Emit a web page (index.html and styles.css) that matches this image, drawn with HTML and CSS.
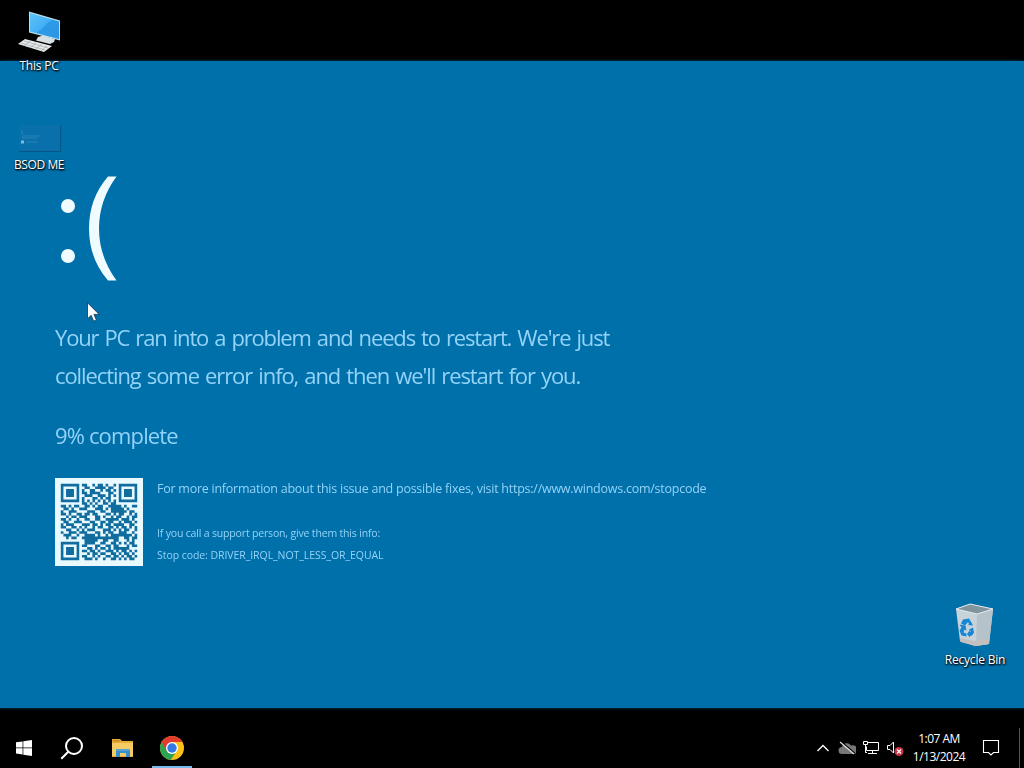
FILE: index.html
```html
<!DOCTYPE html>
<html lang="en">
<head>
  <meta charset="UTF-8">
  <meta name="viewport" content="width=device-width, initial-scale=1.0">
  <title>Desktop</title>
  <link rel="stylesheet" href="styles.css">
</head>
<body>

  <div class="desktop">
    <main class="wallpaper">
      <svg class="sad-face" width="64" height="110" viewBox="0 0 64 110">
        <circle cx="13" cy="32" r="7"/>
        <circle cx="13" cy="82" r="7"/>
        <path d="M53 2.500h8.500q-17.500 24-17.500 52t17.500 52h-8.500q-19-22-19-52t19-52z"/>
      </svg>

      <p class="message"><span class="line-one">Your PC ran into a problem and needs to restart. We're just</span><br><span class="line-two">collecting some error info, and then we'll restart for you.</span></p>
      <p class="progress">9% complete</p>

      <div class="details">
        <svg class="qr" id="qrCode" width="88" height="88" viewBox="-2.200 -2.200 33.400 33.400"></svg>
        <div class="info">
          <p class="more">For more information about this issue and possible fixes, visit https://www.windows.com/stopcode</p>
          <p class="support">If you call a support person, give them this info:</p>
          <p class="stop-code">Stop code: DRIVER_IRQL_NOT_LESS_OR_EQUAL</p>
        </div>
      </div>
    </main>

    <!-- Desktop icons -->
    <div class="icon this-pc">
      <svg width="48" height="48" viewBox="0 0 48 48">
        <defs>
          <linearGradient id="screen" x1="0" y1="0" x2="1" y2="1">
            <stop offset="0" stop-color="#5fc3fb"/>
            <stop offset=".5" stop-color="#43aef4"/>
            <stop offset=".5" stop-color="#2d9be9"/>
            <stop offset="1" stop-color="#2d94e2"/>
          </linearGradient>
        </defs>
        <path d="M14 3.500l31 9v20l-31-8z" fill="#b7dff2"/>
        <path d="M15 5l29 8.500v17.500l-29-7.500z" fill="url(#screen)"/>
        <path d="M23 29l5-1.500 12 3.500-1 3-4 2-14-3.500z" fill="#d7e0e5"/>
        <path d="M10 31l27 7-8 6-26-8z" fill="#e7e9ea"/>
        <path d="M9 33l24 7M6 35l24 7M15 33l-6 5M21 35l-6 5M27 36l-6 5M32 38l-6 5" stroke="#969da1" stroke-width=".6"/>
      </svg>
      <span>This PC</span>
    </div>

    <div class="icon bsod-me">
      <svg width="48" height="48" viewBox="0 0 48 48">
        <path d="M4 44.500h41.500v-26" fill="none" stroke="#075585" stroke-width="1.200"/>
        <path d="M4 18h41v26h-41z" fill="#0a70ab"/>
        <path d="M7 23v4M7 29h18M7 31h15M11 35h12" stroke="#3d90c0" stroke-width=".6"/>
        <path d="M6 33.500h3v3h-3z" fill="#7dbbd9"/>
      </svg>
      <span>BSOD ME</span>
    </div>

    <div class="icon recycle-bin">
      <svg width="48" height="48" viewBox="0 0 48 48">
        <path d="M5 7l14-5 23 5-4 35-14 2-15-5z" fill="#c7d2d9"/>
        <path d="M5 7l14-5 23 5-16 5z" fill="#82949e"/>
        <path d="M26 12l16-5-4 35-13 2z" fill="#b5c2ca"/>
        <path d="M9 36l15 3 14-2-.5 5-13 2-15-4z" fill="#c5bfc0"/>
        <path d="M5 7l14-5 23 5-16 5z" fill="none" stroke="#e3ebee" stroke-width="1"/>
        <!-- three chasing arrows -->
        <g fill="#1687d5">
          <path d="M12 17.500l6-1 3 5 1 2-5-.5 1-1-1-2-3 3.500-4-2z"/>
          <path d="M8.500 22.500l6 1 1 5-2-1-1 3 3 1v3l-5-1-2-5 2-3z"/>
          <path d="M18 27.500l4-2 1 5-2 3-2 .5v1.500l-3-3.500 3-4v2h1z"/>
        </g>
      </svg>
      <span>Recycle Bin</span>
    </div>

    <svg class="cursor" width="13" height="20" viewBox="0 0 13 20">
      <path d="M.5.8v16l3.700-3.500 2.500 5.900 2.700-1.200-2.500-5.600h5.300z" fill="#fff" stroke="#10344a" stroke-width=".8"/>
    </svg>
  </div>

  <footer class="taskbar">
    <div class="apps">
      <div class="app start">
        <svg width="16" height="16" viewBox="0 0 16 16" fill="#fff">
          <path d="M0 2.300l6.600-.9v6.200h-6.600zM7.300 1.300l8.700-1.300v7.600h-8.700zM0 8.300h6.600v6.200l-6.600-.9zM7.300 8.300h8.700v7.700l-8.700-1.300z"/>
        </svg>
      </div>
      <div class="app">
        <svg width="24" height="24" viewBox="0 0 24 24" fill="none" stroke="#fff" stroke-width="2">
          <circle cx="14" cy="10" r="8"/>
          <path d="M8.300 15.700l-7 7"/>
        </svg>
      </div>
      <div class="app">
        <svg width="24" height="24" viewBox="0 0 24 24">
          <path d="M2 3h8l2 2h11v16h-21z" fill="#e6ae38"/>
          <path d="M3 4h6l1.500 1.500h-7.500z" fill="#c98b26"/>
          <path d="M2 7h21v13h-21z" fill="#f5cc63"/>
          <path d="M6 13h14v8h-4v-4h-6v4h-4z" fill="#398fcb"/>
          <path d="M6 13h14v2h-14z" fill="#55a3d3"/>
        </svg>
      </div>
      <div class="app active">
        <svg width="24" height="24" viewBox="0 0 24 24">
          <circle cx="12" cy="12" r="12" fill="#fbc116"/>
          <path d="M12 12l-10.390-6a12 12 0 0 0 9.200 17.940l5.990-9.240z" fill="#2da44f"/>
          <path d="M1.610 6a12 12 0 0 1 20.780 0h-10.390l-5.200 9z" fill="#e33b2e"/>
          <circle cx="12" cy="12" r="6" fill="#fff"/>
          <circle cx="12" cy="12" r="4.700" fill="#3478e5"/>
        </svg>
      </div>
    </div>

    <div class="tray">
      <svg class="chevron" width="14" height="10" viewBox="0 0 14 10"><path d="M1.500 8l5.500-5.500 5.500 5.500" fill="none" stroke="#fff" stroke-width="1.300"/></svg>
      <svg width="18" height="16" viewBox="0 0 18 16">
        <path d="M4 14a3.500 3.500 0 0 1 0-7 5 5 0 0 1 9-1.500 4 4 0 0 1 3.500 8.500z" fill="#777"/>
        <path d="M2.800 1.200l14 12" stroke="#000" stroke-width="1.200"/>
        <path d="M2 2l14 12" stroke="#ddd" stroke-width="1.200"/>
      </svg>
      <svg width="18" height="16" viewBox="0 0 18 16" fill="none" stroke="#fff">
        <path d="M6 2.500h10.500v8h-12v-4M10.500 10.500v3M6 13.500h9M1.500 1.500h4v3h-4zM3.500 4.500v8h1.500"/>
      </svg>
      <svg width="18" height="18" viewBox="0 0 18 18">
        <path d="M7.500 14v-11l-3.500 3.500h-2.500v4h2.500z" fill="none" stroke="#fff"/>
        <circle cx="13" cy="12.500" r="4.500" fill="#c93442"/>
        <path d="M11 10.500l4 4M15 10.500l-4 4" stroke="#fff" stroke-width="1.200"/>
      </svg>
      <div class="clock"><span>1:07 AM</span><span>1/13/2024</span></div>
      <svg class="action-center" width="18" height="18" viewBox="0 0 18 18"><path d="M1.500 1.500h15v12h-5l-2.500 2.500-2.500-2.500h-5z" fill="none" stroke="#fff" stroke-width="1.100"/></svg>
      <div class="show-desktop"></div>
    </div>
  </footer>

  <script src="qr.js"></script>
</body>
</html>
```

FILE: styles.css
```css
* {
  margin: 0;
  padding: 0;
  box-sizing: border-box;
}

body {
  width: 1024px;
  height: 768px;
  background-color: #000;
  font-family: "Open Sans", "Noto Sans", sans-serif;
  color: #fff;
  display: flex;
  flex-direction: column;
  overflow: hidden;
}

.desktop {
  height: 728px;
  padding: 61px 0 20px;
  position: relative;
}

.wallpaper {
  height: 647px;
  padding: 113px 55px 0;
  background-color: #0070aa;
  box-shadow: 0 0 3px #00466b;
  color: #93d3f8;
  white-space: nowrap;
}

/* the wallpaper is a stretched photo, so its content is a bit soft */
.sad-face,
.message,
.progress,
.info {
  filter: blur(0.5px);
}

.sad-face {
  display: block;
  fill: #f0fbff;
}

.message {
  margin-top: 34px;
  font-size: 22px;
  line-height: 38px;
  word-spacing: 1.5px;
}

.line-one {
  letter-spacing: -1.15px;
}

.line-two {
  letter-spacing: -1.09px;
}

.progress {
  margin-top: 22px;
  font-size: 22px;
  line-height: 38px;
  letter-spacing: -0.85px;
}

.details {
  margin-top: 24px;
  display: flex;
  gap: 14px;
}

.qr {
  background-color: #e8faff;
  fill: #126d9f;
}

.qr path {
  filter: blur(0.25px);
}

.info {
  padding-top: 1px;
}

.more {
  font-size: 12.5px;
  line-height: 20px;
  letter-spacing: -0.25px;
}

.support {
  margin-top: 23px;
  font-size: 10.5px;
  line-height: 22px;
  letter-spacing: -0.17px;
}

.stop-code {
  font-size: 10.5px;
  line-height: 22px;
  letter-spacing: -0.06px;
}

.icon {
  position: absolute;
  width: 76px;
  display: flex;
  flex-direction: column;
  align-items: center;
  font-size: 12px;
  line-height: 16px;
  letter-spacing: -0.2px;
  white-space: nowrap;
  text-shadow: 0 1px 2px #000, 1px 1px 2px #000;
}

.icon span {
  margin-top: 2px;
}

.this-pc {
  left: 1px;
  top: 8px;
}

.bsod-me {
  left: 1px;
  top: 107px;
}

.bsod-me span {
  letter-spacing: -0.4px;
}

.recycle-bin {
  left: 937px;
  top: 602px;
}

.cursor {
  position: absolute;
  left: 87px;
  top: 302px;
}

.taskbar {
  height: 40px;
  display: flex;
  justify-content: space-between;
}

.apps {
  display: flex;
  padding-left: 4px;
  gap: 10px;
}

.app {
  width: 40px;
  display: flex;
  align-items: center;
  justify-content: center;
}

.start {
  margin-right: -2px;
}

.active {
  border-bottom: 2px solid #76b9ed;
  padding-top: 2px;
}

.tray {
  display: flex;
  align-items: center;
  gap: 6px;
}

.tray .chevron {
  margin-right: 2px;
}

.clock {
  width: 56px;
  margin-left: 1px;
  margin-right: 1px;
  display: flex;
  flex-direction: column;
  align-items: center;
  font-size: 12px;
  line-height: 18px;
  letter-spacing: -0.5px;
}

.action-center {
  margin-left: 8px;
}

.show-desktop {
  width: 5px;
  height: 40px;
  margin-left: 13px;
  border-left: 1px solid #555;
}
```

FILE: qr.js
```js
const rows = [
  "11111110110010110100101111111",
  "10000010011001111011001000001",
  "10111010100110010110101011101",
  "10111010110111100011001011101",
  "10111010011100111010101011101",
  "10000010100011010110001000001",
  "11111110101010101010101111111",
  "00000000110101001101100000000",
  "11010110011010110011111010011",
  "01101001110001110101111101000",
  "10011100001110011001111110110",
  "11010011011011000110101100101",
  "00101101110001101001011001011",
  "11010010011001100111110111010",
  "01100111000110011011001011101",
  "10111000111011010110111100110",
  "11001101010010110011010110101",
  "00110010101110001110101011001",
  "10011101110001101011001110010",
  "01110010011110100101111111101",
  "00101100111111111111110011011",
  "00000000011111001100110001010",
  "11111110011110011001101010110",
  "10000010110001100110110001011",
  "10111010001101011010111111000",
  "10111010110110100111010110101",
  "10111010001011011001101011010",
  "10000010110010100110110101101",
  "11111110011101001001101010110"
];

const qr = document.getElementById("qrCode");
const path = document.createElementNS("http://www.w3.org/2000/svg", "path");
let d = "";
rows.forEach((row, y) => {
  [...row].forEach((cell, x) => {
    if (cell === "1") d += `M${x} ${y}h1v1h-1z`;
  });
});
path.setAttribute("d", d);
qr.appendChild(path);
```
